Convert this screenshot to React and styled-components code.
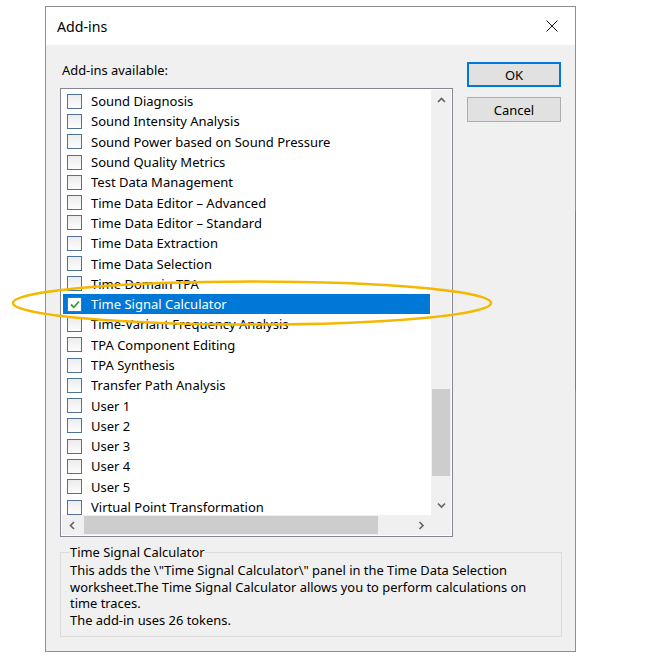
import React from 'react'
import styled, { createGlobalStyle } from 'styled-components'

const GlobalStyle = createGlobalStyle`
body {
    margin: 0;
    background: #fff;
    font-family: "Noto Sans", "Liberation Sans", sans-serif;
    color: #000;
}
`

const Page = styled.div`
position: relative;
width: 656px;
height: 657px;
padding: 6px 0 0 45px;
box-sizing: border-box;
`

const Dialog = styled.div`
position: relative;
width: 531px;
height: 646px;
border: 1px solid #8f8f8f;
background: #f0f0f0;
box-sizing: border-box;
display: flex;
flex-direction: column;

&::after{
    content: '';
    position: absolute;
    right: -1px;
    top: 204px;
    width: 1px;
    height: 180px;
    background: #b26a6a;
}
`

const TitleBar = styled.div`
height: 38px;
background: #fff;
display: flex;
align-items: center;
justify-content: space-between;
padding: 0 17px 0 11px;
font-size: 14.2px;
`

const Body = styled.div`
flex: 1;
padding: 17px 14px 14px 14px;
display: flex;
flex-direction: column;
`

const TopRow = styled.div`
display: flex;
gap: 14px;
`

const LeftCol = styled.div`
width: 393px;
display: flex;
flex-direction: column;
`

const Label = styled.div`
font-size: 12.9px;
line-height: 16px;
height: 16px;
margin: 0 0 10px 2px;
`

const ListBox = styled.div`
height: 449px;
border: 1px solid #828790;
background: #fff;
box-sizing: border-box;
padding: 1px;
display: grid;
grid-template-columns: 1fr 20px;
grid-template-rows: 1fr 20px;
`

const Rows = styled.div`
overflow: hidden;
padding-top: 1px;
`

const Row = styled.div`
height: 20.3px;
margin: 0 1px;
display: flex;
align-items: center;
padding-left: 4px;
font-size: 13px;
white-space: nowrap;
background: ${p => p.$selected ? '#0078d7' : 'transparent'};
color: ${p => p.$selected ? '#fff' : '#000'};
`

const Check = styled.span`
width: 15px;
height: 15px;
box-sizing: border-box;
border: 1px solid #4f7397;
background: ${p => p.$checked ? '#fff' : 'linear-gradient(#ececec, #fdfdfd)'};
margin-right: 9px;
flex-shrink: 0;
display: flex;
align-items: center;
justify-content: center;
`

const VScroll = styled.div`
background: #f0f0f0;
display: flex;
flex-direction: column;
align-items: center;
`

const HScroll = styled.div`
background: #f0f0f0;
display: flex;
align-items: center;
`

const Corner = styled.div`
background: #f0f0f0;
`

const Arrow = styled.div`
width: 20px;
height: 20px;
flex-shrink: 0;
display: flex;
align-items: center;
justify-content: center;
`

const Track = styled.div`
flex: 1;
display: flex;
flex-direction: ${p => p.$vertical ? 'column' : 'row'};
`

const Thumb = styled.div`
background: #cdcdcd;
${p => p.$vertical
    ? 'width: 18px; margin: 0 auto;'
    : 'height: 18px; margin: auto 0;'}
`

const Spacer = styled.div`
flex: ${p => p.$grow ? 1 : 'none'};
`

const Buttons = styled.div`
display: flex;
flex-direction: column;
gap: 10px;
`

const Button = styled.button`
width: 94px;
height: 25px;
box-sizing: border-box;
background: #e1e1e1;
border: ${p => p.$default ? '2px solid #0078d7' : '1px solid #adadad'};
font-family: inherit;
font-size: 13px;
color: #000;
padding: 0;
`

const Group = styled.fieldset`
margin: 7px 0 0 0;
width: 502px;
height: 93px;
box-sizing: border-box;
border: 1px solid #dcdcdc;
padding: 2px 25px 0 9px;
font-size: 12.9px;
line-height: 16.6px;
`

const Legend = styled.legend`
padding: 0;
font-size: 12.9px;
line-height: 16px;
`

const Overlay = styled.svg`
position: absolute;
left: 0;
top: 0;
pointer-events: none;
`

const items = [
    'Sound Diagnosis',
    'Sound Intensity Analysis',
    'Sound Power based on Sound Pressure',
    'Sound Quality Metrics',
    'Test Data Management',
    'Time Data Editor – Advanced',
    'Time Data Editor – Standard',
    'Time Data Extraction',
    'Time Data Selection',
    'Time Domain TPA',
    'Time Signal Calculator',
    'Time-Variant Frequency Analysis',
    'TPA Component Editing',
    'TPA Synthesis',
    'Transfer Path Analysis',
    'User 1',
    'User 2',
    'User 3',
    'User 4',
    'User 5',
    'Virtual Point Transformation',
]

const Chevron = ({ dir }) => {
    const pts = {
        up: '1,5 4.5,1.5 8,5',
        down: '1,1.5 4.5,5 8,1.5',
        left: '5,1 1.5,4.5 5,8',
        right: '1.5,1 5,4.5 1.5,8',
    }[dir]
    const vert = dir === 'up' || dir === 'down'
    return (
        <svg width={vert ? 9 : 7} height={vert ? 7 : 9} viewBox={vert ? '0 0 9 7' : '0 0 7 9'}>
            <polyline points={pts} fill="none" stroke="#606060" strokeWidth="1.6" />
        </svg>
    )
}

const App = () => {
    return (
        <Page>
            <GlobalStyle />
            <Dialog>
                <TitleBar>
                    <span>Add-ins</span>
                    <svg width="12" height="12" viewBox="0 0 12 12">
                        <path d="M0.5 0.5 L11.5 11.5 M11.5 0.5 L0.5 11.5" stroke="#111" strokeWidth="1" />
                    </svg>
                </TitleBar>
                <Body>
                    <TopRow>
                        <LeftCol>
                            <Label>Add-ins available:</Label>
                            <ListBox>
                                <Rows>
                                    {items.map(name => {
                                        const sel = name === 'Time Signal Calculator'
                                        return (
                                            <Row key={name} $selected={sel}>
                                                <Check $checked={sel}>
                                                    {sel && (
                                                        <svg width="10" height="9" viewBox="0 0 10 9">
                                                            <polyline points="1,4.5 3.8,7.3 9,1.5" fill="none" stroke="#2ea02e" strokeWidth="1.8" />
                                                        </svg>
                                                    )}
                                                </Check>
                                                {name}
                                            </Row>
                                        )
                                    })}
                                </Rows>
                                <VScroll>
                                    <Arrow><Chevron dir="up" /></Arrow>
                                    <Track $vertical>
                                        <Spacer $grow />
                                        <Thumb $vertical style={{ height: 87 }} />
                                        <Spacer style={{ height: 19 }} />
                                    </Track>
                                    <Arrow><Chevron dir="down" /></Arrow>
                                </VScroll>
                                <HScroll>
                                    <Arrow><Chevron dir="left" /></Arrow>
                                    <Track>
                                        <Thumb style={{ width: 294, marginLeft: 2 }} />
                                    </Track>
                                    <Arrow><Chevron dir="right" /></Arrow>
                                </HScroll>
                                <Corner />
                            </ListBox>
                        </LeftCol>
                        <Buttons>
                            <Button $default>OK</Button>
                            <Button>Cancel</Button>
                        </Buttons>
                    </TopRow>
                    <Group>
                        <Legend>Time Signal Calculator</Legend>
                        This adds the \"Time Signal Calculator\" panel in the Time Data Selection worksheet.The Time Signal Calculator allows you to perform calculations on time traces.
                        <br />
                        The add-in uses 26 tokens.
                    </Group>
                </Body>
            </Dialog>
            <Overlay width="656" height="657">
                <ellipse cx="252" cy="303" rx="239" ry="21.5" fill="none" stroke="#f5b800" strokeWidth="2.5" />
            </Overlay>
        </Page>
    )
}

export default App
